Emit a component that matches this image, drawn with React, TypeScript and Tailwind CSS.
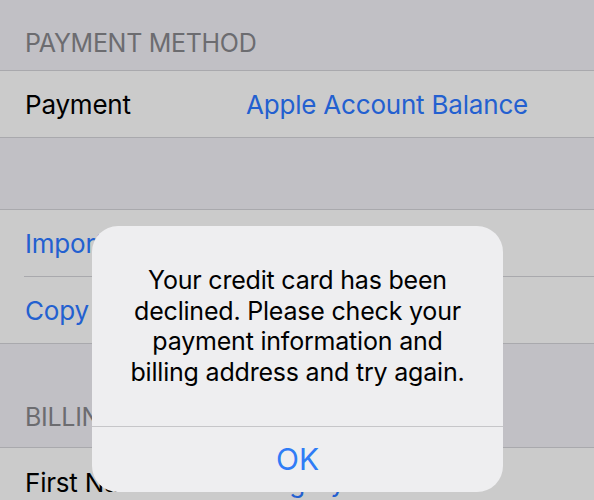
import React from "react";

const font = { fontFamily: "Inter, 'Noto Sans', sans-serif" };

export default function App() {
  return (
    <div className="relative h-[500px] w-[594px] overflow-hidden bg-[#c1c0c5]" style={font}>
      {/* Payment method header */}
      <div className="flex h-[70px] items-end px-[25px] pb-[11px] text-[25px] leading-[32px] tracking-[-0.3px] text-[#6c6c70]">
        PAYMENT METHOD
      </div>
      <div className="flex h-[68px] items-center border-y border-[#a9a9ad] bg-[#cbcbcb] px-[25px] text-[26px] tracking-[-0.2px]">
        <span className="w-[221px] text-black">Payment</span>
        <span className="text-[#2360d0]">Apple Account Balance</span>
      </div>
      <div className="h-[71px]" />
      <div className="border-y border-[#a9a9ad] bg-[#cbcbcb] text-[26px] tracking-[-0.2px]">
        <div className="flex h-[66px] items-center px-[25px] text-[#2360d0]">Import Address</div>
        <div className="ml-[24px] h-px bg-[#a9a9ad]" />
        <div className="flex h-[66px] items-center px-[25px] text-[#2360d0]">Copy Address</div>
      </div>
      <div className="flex h-[103px] items-end px-[25px] pb-[14px] text-[25px] leading-[32px] tracking-[-0.3px] text-[#6c6c70]">
        BILLING ADDRESS
      </div>
      <div className="flex h-[68px] items-center border-t border-[#a9a9ad] bg-[#cbcbcb] px-[25px] pt-[2px] text-[26px] tracking-[-0.2px]">
        <span className="w-[221px] text-black">First Name</span>
        <span className="text-[#2360d0]">Gregory</span>
      </div>

      {/* Alert */}
      <div className="absolute left-[92px] top-[226px] flex h-[266px] w-[411px] flex-col overflow-hidden rounded-[26px] bg-[#eeeef0]">
        <div className="flex h-[200px] items-center justify-center px-[30px] text-center text-[25px] leading-[30.5px] tracking-[-0.2px] text-black">
          Your credit card has been declined. Please check your payment information and billing address and try again.
        </div>
        <div className="h-px bg-[#c6c6c9]" />
        <div className="flex flex-1 items-center justify-center text-[30px] text-[#2f7cf6]">OK</div>
      </div>
    </div>
  );
}
